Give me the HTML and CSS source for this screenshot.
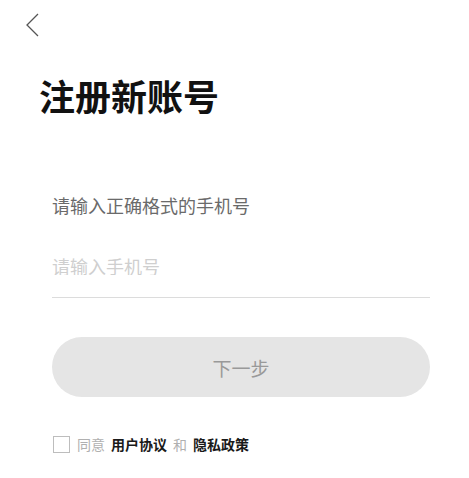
FILE: index.html
```html
<!DOCTYPE html>
<html lang="zh-CN">
<head>
<meta charset="utf-8">
<title>注册新账号</title>
<link rel="stylesheet" href="styles.css">
</head>
<body>
<header class="top">
  <svg class="back" width="14" height="24" viewBox="0 0 14 24" aria-label="返回">
    <path d="M12 1 L1 12 L12 23" fill="none" stroke="#555" stroke-width="1.3"/>
  </svg>
</header>
<h1 class="title">注册新账号</h1>
<main class="form">
  <div class="label">请输入正确格式的手机号</div>
  <div class="field">
    <input class="phone" type="tel" placeholder="请输入手机号">
  </div>
  <button class="next" type="button">下一步</button>
  <div class="agree">
    <span class="box"></span>
    <span class="muted">同意</span>
    <span class="link">用户协议</span>
    <span class="muted">和</span>
    <span class="link">隐私政策</span>
  </div>
</main>
</body>
</html>
```
FILE: styles.css
```css
html, body {
  margin: 0;
  padding: 0;
  background: #fff;
}
body {
  font-family: "Noto Sans CJK SC", "Noto Sans", sans-serif;
  width: 469px;
}
.top {
  height: 35px;
  padding: 13px 0 0 26px;
}
.back {
  display: block;
}
.title {
  margin: 29px 0 0 39px;
  font-size: 36px;
  line-height: 36px;
  height: 36px;
  font-weight: 700;
  color: #111;
}
.form {
  padding: 0 39px 0 52px;
}
.label {
  margin-top: 83px;
  font-size: 18px;
  line-height: 18px;
  height: 18px;
  color: #6a6a6a;
}
.field {
  margin-top: 43px;
  padding-bottom: 22px;
  border-bottom: 1px solid #dcdcdc;
}
.phone {
  display: block;
  width: 100%;
  height: 18px;
  padding: 0;
  margin: 0;
  border: none;
  outline: none;
  background: transparent;
  font-family: inherit;
  font-size: 18px;
  line-height: 18px;
  color: #333;
}
.phone::placeholder {
  color: #cfcfcf;
}
.next {
  display: block;
  margin-top: 39px;
  width: 100%;
  height: 60px;
  border: none;
  border-radius: 30px;
  background: #e5e5e5;
  color: #999;
  font-family: inherit;
  font-size: 19px;
  padding: 0;
}
.agree {
  margin-top: 39px;
  display: flex;
  align-items: center;
  height: 17px;
  font-size: 14px;
  line-height: 17px;
  margin-left: 1px;
}
.box {
  width: 17px;
  height: 17px;
  box-sizing: border-box;
  border: 1.5px solid #bdbdbd;
  margin-right: 7px;
}
.muted {
  color: #b0b0b0;
  margin-right: 6px;
}
.link {
  color: #1a1a1a;
  font-weight: 700;
  margin-right: 6px;
}
```
